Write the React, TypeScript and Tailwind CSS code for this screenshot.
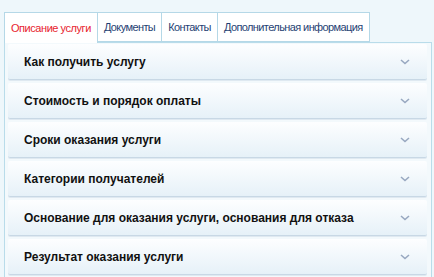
import React from 'react'

const tabs: string[] = ['Описание услуги', 'Документы', 'Контакты', 'Дополнительная информация'];

const items: string[] = [
    'Как получить услугу',
    'Стоимость и порядок оплаты',
    'Сроки оказания услуги',
    'Категории получателей',
    'Основание для оказания услуги, основания для отказа',
    'Результат оказания услуги',
];

function Chevron() {
    return (
        <svg width="10" height="6" viewBox="0 0 10 6" className="shrink-0">
            <path d="M1 1 L5 4.5 L9 1" fill="none" stroke="#98a8c0" strokeWidth="1.6" />
        </svg>
    );
}

export default function App() {
    return (
        <div className="w-[434px] h-[277px] overflow-hidden bg-[#eef7fb] pt-3 pl-[4px] pr-[2px] font-['Liberation_Sans',Arial,sans-serif]">
            <ul className="flex relative z-10">
                {tabs.map((tab: string, index: number) => (
                    <li
                        key={index}
                        className={
                            index === 0
                                ? 'h-[31px] px-[6px] flex items-center text-[11px] tracking-[-0.45px] border border-[#b5d8e7] border-b-0 bg-white text-[#e8232f]'
                                : 'h-[30px] px-[6px] flex items-center text-[11px] tracking-[-0.6px] border border-[#b5d8e7] border-l-0 bg-white text-[#1f3f73]'
                        }
                    >
                        {tab}
                    </li>
                ))}
            </ul>
            <div className="border border-[#b9dcea] bg-[#f3f9fc] mt-[-1px] pl-[3px] pr-[4px] pt-[1px] h-[240px]">
                <div className="flex flex-col gap-[3px]">
                    {items.map((item: string, index: number) => (
                        <div
                            key={index}
                            className="h-[36px] flex items-center justify-between pl-[16px] pr-[17px] rounded-[2px] border-b border-[#c8d8e5] bg-gradient-to-b from-[#fdfeff] to-[#e6f1f8] shadow-[0_1px_0_#dfe9f1]"
                        >
                            <span className="text-[12px] font-bold text-[#111]">{item}</span>
                            <Chevron />
                        </div>
                    ))}
                </div>
            </div>
        </div>
    )
}
